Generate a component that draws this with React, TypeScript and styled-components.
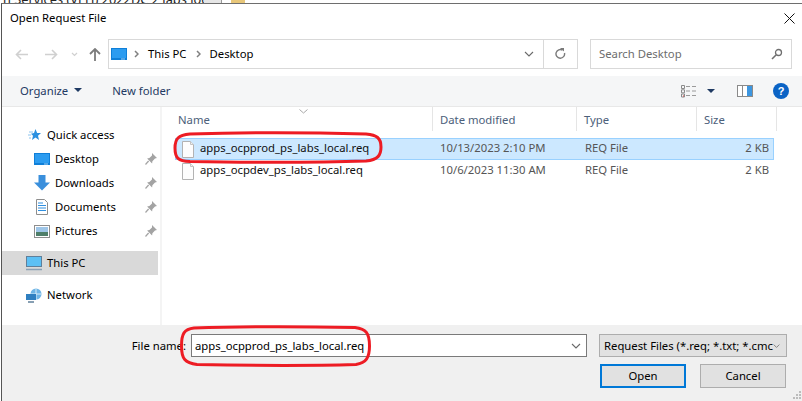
import React from "react";
import styled, { createGlobalStyle } from "styled-components";

const GlobalStyle = createGlobalStyle`
  html, body {
    margin: 0;
    padding: 0;
    background: #fff;
  }
`;

const Stage = styled.div`
  position: relative;
  width: 802px;
  height: 401px;
  overflow: hidden;
  display: flex;
  flex-direction: column;
  background: #fff;
  font-family: "Noto Sans", "Open Sans", "Liberation Sans", sans-serif;
  font-size: 11.3px;
  color: #000;
`;

// the window behind the dialog, only its last pixels show
const BehindStrip = styled.div`
  height: 3px;
  flex: none;
  overflow: hidden;
  display: flex;
  align-items: flex-end;
  padding-left: 3px;
`;

const BehindText = styled.span`
  font-size: 12.8px;
  line-height: 14px;
  margin-bottom: -3px;
  width: 201px;
  white-space: nowrap;
  color: #222;
`;

const BehindPanel = styled.span`
  width: 17px;
  height: 3px;
  background: #e6e6e6;
  border-right: 1px solid #999;
`;

const BehindFolder = styled.span`
  width: 14px;
  height: 3px;
  margin-left: 9px;
  background: #e8c77a;
`;

const Dialog = styled.div`
  flex: 1;
  min-height: 0;
  margin-left: 1px;
  border-top: 1px solid #6e6e6e;
  border-left: 1px solid #555;
  display: flex;
  flex-direction: column;
`;

const TitleBar = styled.div`
  height: 28px;
  flex: none;
  display: flex;
  align-items: center;
  justify-content: space-between;
  padding: 0 7px 0 8px;
`;

const TitleText = styled.span`
  padding-bottom: 2px;
`;

const AddressRow = styled.div`
  height: 30px;
  margin-top: 7px;
  flex: none;
  display: flex;
  align-items: center;
  padding-left: 4px;
`;

const NavArrows = styled.div`
  width: 102px;
  flex: none;
  display: flex;
  align-items: center;
`;

const NavSlot = styled.span<{ $w: number }>`
  width: ${(p) => p.$w}px;
  display: flex;
  justify-content: center;
`;

const AddressBox = styled.div`
  width: 470px;
  height: 30px;
  box-sizing: border-box;
  border: 1px solid #d9d9d9;
  display: flex;
  align-items: center;
  padding-left: 2px;
`;

const Crumb = styled.span`
  margin: 0 9px;
  padding-bottom: 2px;
`;

const CrumbIcon = styled.span`
  display: flex;
  margin-right: 7px;
`;

const Chevron = styled.span`
  display: flex;
`;

const AddressTail = styled.div`
  margin-left: auto;
  display: flex;
  height: 100%;
  align-items: center;
`;

const RefreshCell = styled.div`
  width: 33px;
  height: 100%;
  border-left: 1px solid #d9d9d9;
  display: flex;
  align-items: center;
  justify-content: center;
`;

const DropCell = styled.div`
  width: 29px;
  display: flex;
  justify-content: center;
`;

const SearchBox = styled.div`
  width: 202px;
  height: 30px;
  box-sizing: border-box;
  margin-left: 12px;
  border: 1px solid #d9d9d9;
  display: flex;
  align-items: center;
  justify-content: space-between;
  padding: 0 8px;
  color: #6d6d6d;
`;

const SearchHint = styled.span`
  padding-bottom: 2px;
`;

const Toolbar = styled.div`
  height: 30px;
  flex: none;
  margin-top: 7px;
  background: #f5f6f7;
  border-bottom: 1px solid #e8e8e8;
  display: flex;
  align-items: center;
  padding: 0 13px 0 18px;
  color: #1f3a63;
`;

const ToolButton = styled.span`
  display: flex;
  align-items: center;
  gap: 6px;
  margin-right: 30px;
  padding-bottom: 2px;
`;

const ToolIcons = styled.div`
  margin-left: auto;
  display: flex;
  align-items: center;
`;

const ToolIcon = styled.span<{ $after: number }>`
  display: flex;
  margin-right: ${(p) => p.$after}px;
`;

const Middle = styled.div`
  flex: 1;
  min-height: 0;
  display: flex;
`;

const NavPane = styled.div`
  width: 156px;
  flex: none;
  padding: 16px 2px 0 0;
  border-right: 2px solid #f4f4f4;
`;

const NavItem = styled.div<{ $level?: number; $active?: boolean; $gap?: number }>`
  height: 24px;
  display: flex;
  align-items: center;
  gap: 5px;
  padding-left: ${(p) => (p.$level ? 32 : 24)}px;
  margin-top: ${(p) => p.$gap ?? 0}px;
  background: ${(p) => (p.$active ? "#d9d9d9" : "transparent")};
`;

const NavIcon = styled.span`
  width: 16px;
  height: 16px;
  display: flex;
  align-items: center;
  justify-content: center;
  flex: none;
`;

const NavLabel = styled.span`
  flex: 1;
  padding-bottom: 2px;
`;

const FilePane = styled.div`
  flex: 1;
  min-width: 0;
  padding-left: 9px;
`;

const HeaderRow = styled.div`
  position: relative;
  height: 24px;
  margin-bottom: 7px;
  display: grid;
  grid-template-columns: 262px 144px 120px 80px;
  color: #4c607a;
`;

const HeaderCell = styled.div`
  border-right: 1px solid #e5e5e5;
  display: flex;
  align-items: center;
  padding-left: 7px;
`;

const SortMark = styled.span`
  position: absolute;
  left: 128px;
  top: 2px;
  display: flex;
`;

const FileRow = styled.div<{ $selected?: boolean }>`
  height: 22px;
  width: 599px;
  box-sizing: border-box;
  margin-left: 4px;
  display: grid;
  grid-template-columns: 256px 145px 120px 1fr;
  align-items: center;
  background: ${(p) => (p.$selected ? "#cce8ff" : "transparent")};
  border: 1px solid ${(p) => (p.$selected ? "#99d1ff" : "transparent")};
`;

const NameCell = styled.div`
  display: flex;
  align-items: center;
  gap: 6px;
  padding-left: 6px;
  color: #111;
`;

const NameText = styled.span`
  padding-bottom: 4px;
`;

const MetaCell = styled.div`
  padding: 0 0 4px 8px;
  color: #555;
`;

const SizeCell = styled.div`
  text-align: right;
  padding: 0 4px 4px 0;
  color: #555;
`;

const Footer = styled.div`
  position: relative;
  height: 76px;
  flex: none;
  box-sizing: border-box;
  padding-top: 9px;
  background: #f0f0f0;
  display: grid;
  grid-template-columns: 189px 396px 1fr;
  grid-template-rows: 23px 24px;
  row-gap: 7px;
`;

const FileLabel = styled.label`
  display: flex;
  align-items: center;
  justify-content: flex-end;
  padding-right: 5px;
`;

const NameInput = styled.div`
  background: #fff;
  border: 1px solid #7a7a7a;
  display: flex;
  align-items: center;
  justify-content: space-between;
  padding: 0 5px 0 3px;
  box-sizing: border-box;
`;

const TypeSelect = styled.div`
  margin-left: 12px;
  width: 188px;
  background: #e1e1e1;
  border: 1px solid #adadad;
  display: flex;
  align-items: center;
  justify-content: space-between;
  padding: 0 6px 0 4px;
  box-sizing: border-box;
  overflow: hidden;
  white-space: nowrap;
`;

const ButtonRow = styled.div`
  grid-column: 1 / 4;
  display: flex;
  justify-content: flex-end;
  gap: 14px;
  padding-right: 16px;
`;

const DialogButton = styled.button<{ $primary?: boolean }>`
  width: 86px;
  height: 24px;
  padding: 0 0 2px;
  font: inherit;
  color: #000;
  background: #e1e1e1;
  border: ${(p) => (p.$primary ? "2px solid #0078d7" : "1px solid #adadad")};
`;

const Grip = styled.svg`
  position: absolute;
  right: 0;
  bottom: 1px;
`;

// red hand drawn marks that sit over the dialog
const Marker = styled.svg`
  position: absolute;
  left: 0;
  top: 0;
  pointer-events: none;
`;

const Pin = () => (
  <svg width="14" height="14" viewBox="0 0 14 14">
    <path d="M8 1l5 5-2 .6-2.6 2.6-.3 2.3-5-5 2.3-.4L8 3.6z" fill="#a3a3a3" />
    <path d="M4.6 9L1.5 12.5" stroke="#a3a3a3" strokeWidth="1.2" />
  </svg>
);

const SmallChevron = () => (
  <svg width="10" height="6" viewBox="0 0 10 6">
    <path d="M1 1l4 4 4-4" fill="none" stroke="#6a6a6a" strokeWidth="1.1" />
  </svg>
);

const CrumbArrow = () => (
  <svg width="5" height="8" viewBox="0 0 5 8">
    <path d="M1 1l3 3-3 3" fill="none" stroke="#808080" strokeWidth="1.5" />
  </svg>
);

const Monitor = () => (
  <svg width="16" height="12" viewBox="0 0 16 12">
    <rect width="16" height="12" fill="#0f7fd8" />
    <rect x="1" y="1" width="14" height="9" fill="#2c9cf0" />
    <path d="M10 11h4" stroke="#9fd0f5" />
  </svg>
);

const Doc = () => (
  <svg width="12" height="17" viewBox="0 0 12 17">
    <path d="M.5.5h8l3 3v13H.5z" fill="#fdfdfd" stroke="#b3b3b3" />
    <path d="M8.500.5v3h3" fill="#f0f0f0" stroke="#c4c4c4" />
  </svg>
);

export default function App() {
  return (
    <Stage>
      <GlobalStyle />
      <BehindStrip>
        <BehindText>n Services (VEH) 2022DC 2 labs local</BehindText>
        <BehindPanel />
        <BehindFolder />
      </BehindStrip>
      <Dialog>
        <TitleBar>
          <TitleText>Open Request File</TitleText>
          <svg width="11" height="11" viewBox="0 0 11 11">
            <path d="M.5.5l10 10M10.5.5l-10 10" stroke="#111" />
          </svg>
        </TitleBar>
        <AddressRow>
          <NavArrows>
            <NavSlot $w={30}>
              <svg width="13" height="11" viewBox="0 0 13 11">
                <path d="M6 1L1.500 5.500 6 10M2 5.500h11" fill="none" stroke="#d0d0d0" strokeWidth="1.6" />
              </svg>
            </NavSlot>
            <NavSlot $w={30}>
              <svg width="13" height="11" viewBox="0 0 13 11">
                <path d="M7 1l4.500 4.500L7 10M11 5.500H0" fill="none" stroke="#d0d0d0" strokeWidth="1.6" />
              </svg>
            </NavSlot>
            <NavSlot $w={16}>
              <svg width="7" height="5" viewBox="0 0 7 5">
                <path d="M1 1l2.500 2.500L6 1" fill="none" stroke="#d0d0d0" strokeWidth="1.2" />
              </svg>
            </NavSlot>
            <NavSlot $w={26}>
              <svg width="12" height="13" viewBox="0 0 12 13">
                <path d="M1 6l5-5 5 5M6 1.500V13" fill="none" stroke="#7c7c7c" strokeWidth="1.8" />
              </svg>
            </NavSlot>
          </NavArrows>
          <AddressBox>
            <CrumbIcon><Monitor /></CrumbIcon>
            <Chevron><CrumbArrow /></Chevron>
            <Crumb>This PC</Crumb>
            <Chevron><CrumbArrow /></Chevron>
            <Crumb>Desktop</Crumb>
            <AddressTail>
              <DropCell><SmallChevron /></DropCell>
              <RefreshCell>
                <svg width="11" height="12" viewBox="0 0 11 12">
                  <path d="M9.500 5a4.300 4.300 0 1 1-2-2.800" fill="none" stroke="#7a7a7a" strokeWidth="1.4" />
                  <path d="M5 0h4v3.600z" fill="#7a7a7a" />
                </svg>
              </RefreshCell>
            </AddressTail>
          </AddressBox>
          <SearchBox>
            <SearchHint>Search Desktop</SearchHint>
            <svg width="12" height="12" viewBox="0 0 12 12">
              <circle cx="7.500" cy="4.500" r="3" fill="none" stroke="#6f6f6f" strokeWidth="1.3" />
              <path d="M5 7l-4 4" stroke="#6f6f6f" strokeWidth="1.6" />
            </svg>
          </SearchBox>
        </AddressRow>
        <Toolbar>
          <ToolButton>
            Organize
            <svg width="8" height="4" viewBox="0 0 8 4"><path d="M0 0h8L4 4z" fill="#1f3a63" /></svg>
          </ToolButton>
          <ToolButton>New folder</ToolButton>
          <ToolIcons>
            <ToolIcon $after={10}>
              <svg width="16" height="13" viewBox="0 0 16 13">
                <path d="M.5.500h3v3h-3zM.5 4.800h3v3h-3zM.5 9h3v3h-3z" fill="none" stroke="#8a8a8a" />
                <path d="M2 11h1" stroke="#d03030" />
                <path d="M5 1.500h4M11 1.500h4M5 6h4M11 6h4M5 10.500h4M11 10.500h4" stroke="#9a9a9a" />
              </svg>
            </ToolIcon>
            <ToolIcon $after={22}>
              <svg width="8" height="4" viewBox="0 0 8 4"><path d="M0 0h8L4 4z" fill="#1f3a63" /></svg>
            </ToolIcon>
            <ToolIcon $after={20}>
              <svg width="16" height="12" viewBox="0 0 16 12">
                <rect x=".5" y=".5" width="15" height="11" fill="#fff" stroke="#8a8a8a" />
                <rect x="10" y="1" width="5" height="10" fill="#3d96e0" />
                <path d="M5.500 1v10" stroke="#8a8a8a" />
              </svg>
            </ToolIcon>
            <ToolIcon $after={0}>
              <svg width="16" height="16" viewBox="0 0 16 16">
                <circle cx="8" cy="8" r="8" fill="#0b63c5" />
                <text x="8" y="12" textAnchor="middle" fontSize="11" fontWeight="700" fill="#fff" fontFamily="Liberation Sans">?</text>
              </svg>
            </ToolIcon>
          </ToolIcons>
        </Toolbar>
        <Middle>
          <NavPane>
            <NavItem>
              <NavIcon>
                <svg width="16" height="14" viewBox="0 0 16 14">
                  <path d="M9.500 1l1.600 4H15l-3 2.800 1 4.200-3.500-2.400L6 12l1-4.200-2-2L8 5z" fill="#2b90e0" />
                  <path d="M3 4h4M2 7h3M3 10h2" stroke="#8cc4ee" />
                </svg>
              </NavIcon>
              <NavLabel>Quick access</NavLabel>
            </NavItem>
            <NavItem $level={1}>
              <NavIcon><Monitor /></NavIcon>
              <NavLabel>Desktop</NavLabel>
              <Pin />
            </NavItem>
            <NavItem $level={1}>
              <NavIcon>
                <svg width="16" height="16" viewBox="0 0 16 16">
                  <path d="M4.500 0h7v7.500H16L8 15.500 0 7.500h4.500z" fill="#3a8fdc" />
                </svg>
              </NavIcon>
              <NavLabel>Downloads</NavLabel>
              <Pin />
            </NavItem>
            <NavItem $level={1}>
              <NavIcon>
                <svg width="12" height="16" viewBox="0 0 12 16">
                  <path d="M.5.500h8l3 3v12H.5z" fill="#fff" stroke="#8e8e8e" />
                  <path d="M2 4h5M2 6.500h8M2 9h8M2 11.500h8" stroke="#2f8fe0" />
                </svg>
              </NavIcon>
              <NavLabel>Documents</NavLabel>
              <Pin />
            </NavItem>
            <NavItem $level={1}>
              <NavIcon>
                <svg width="16" height="13" viewBox="0 0 16 13">
                  <rect x=".5" y=".5" width="15" height="12" fill="#fff" stroke="#8e8e8e" />
                  <rect x="2" y="2" width="12" height="5" fill="#9fc6e8" />
                  <rect x="2" y="7" width="12" height="4" fill="#4f7f6a" />
                </svg>
              </NavIcon>
              <NavLabel>Pictures</NavLabel>
              <Pin />
            </NavItem>
            <NavItem $active $gap={8}>
              <NavIcon>
                <svg width="16" height="15" viewBox="0 0 16 15">
                  <rect x=".5" y=".5" width="15" height="10" fill="#5cc0f5" stroke="#5f7f9a" />
                  <path d="M0 13.500h16" stroke="#8aa0b5" strokeWidth="1.5" />
                </svg>
              </NavIcon>
              <NavLabel>This PC</NavLabel>
            </NavItem>
            <NavItem $gap={8}>
              <NavIcon>
                <svg width="16" height="15" viewBox="0 0 16 15">
                  <circle cx="10" cy="6" r="5.500" fill="#6fb5e6" />
                  <path d="M10 .5v11M5 6h10" stroke="#d8ecf8" />
                  <rect x="0" y="6" width="10" height="6" fill="#2f7fc0" />
                  <path d="M2 14h6" stroke="#5f7f9a" strokeWidth="1.5" />
                </svg>
              </NavIcon>
              <NavLabel>Network</NavLabel>
            </NavItem>
          </NavPane>
          <FilePane>
            <HeaderRow>
              <SortMark>
                <svg width="9" height="5" viewBox="0 0 9 5">
                  <path d="M.5.500l4 3.500 4-3.500" fill="none" stroke="#a8a8a8" />
                </svg>
              </SortMark>
              <HeaderCell>Name</HeaderCell>
              <HeaderCell>Date modified</HeaderCell>
              <HeaderCell>Type</HeaderCell>
              <HeaderCell>Size</HeaderCell>
            </HeaderRow>
            <FileRow $selected>
              <NameCell><Doc /><NameText>apps_ocpprod_ps_labs_local.req</NameText></NameCell>
              <MetaCell>10/13/2023 2:10 PM</MetaCell>
              <MetaCell>REQ File</MetaCell>
              <SizeCell>2 KB</SizeCell>
            </FileRow>
            <FileRow>
              <NameCell><Doc /><NameText>apps_ocpdev_ps_labs_local.req</NameText></NameCell>
              <MetaCell>10/6/2023 11:30 AM</MetaCell>
              <MetaCell>REQ File</MetaCell>
              <SizeCell>2 KB</SizeCell>
            </FileRow>
          </FilePane>
        </Middle>
        <Footer>
          <FileLabel>File name:</FileLabel>
          <NameInput>
            apps_ocpprod_ps_labs_local.req
            <SmallChevron />
          </NameInput>
          <TypeSelect>
            <span>Request Files (*.req; *.txt; *.cmc</span>
            <SmallChevron />
          </TypeSelect>
          <ButtonRow>
            <DialogButton $primary>Open</DialogButton>
            <DialogButton>Cancel</DialogButton>
          </ButtonRow>
          <Grip width="10" height="10" viewBox="0 0 10 10">
            <path d="M7 1h2v2H7zM4 4h2v2H4zM7 4h2v2H7zM1 7h2v2H1zM4 7h2v2H4zM7 7h2v2H7z" fill="#bcbcbc" />
          </Grip>
        </Footer>
      </Dialog>
      <Marker width="802" height="401" viewBox="0 0 802 401">
        <path
          d="M190 134C178 135 175 139 175 148C175 158 178 161 190 161.500C250 162.500 320 162.500 366 161C378 160 381 155 381 147C381 138 377 135 366 134C310 132.500 240 132.500 190 134Z"
          fill="none"
          stroke="#ed1c24"
          strokeWidth="3"
        />
        <path
          d="M194 328C184 329 181.500 334 181.500 346C181.500 359 185 363 197 364.500C250 365.500 320 365.500 356 364.500C366 363 369.500 358 369.500 346C369.500 333 366 329 355 327.500C300 326.500 240 326.500 194 328Z"
          fill="none"
          stroke="#ed1c24"
          strokeWidth="3"
        />
      </Marker>
    </Stage>
  );
}
